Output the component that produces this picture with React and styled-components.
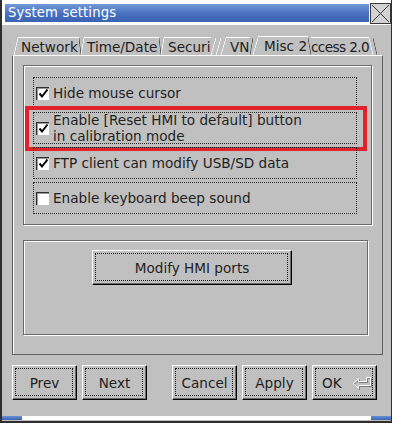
import styled, { createGlobalStyle } from 'styled-components';

const GlobalStyle = createGlobalStyle`
    html, body {
        margin: 0;
        padding: 0;
        background: #ffffff;
    }
    body {
        font-family: 'DejaVu Sans', 'Noto Sans', sans-serif;
    }
`;

const options = [
    { label: 'Hide mouse cursor', checked: true },
    { label: ['Enable [Reset HMI to default] button', 'in calibration mode'], checked: true, marked: true },
    { label: 'FTP client can modify USB/SD data', checked: true },
    { label: 'Enable keyboard beep sound', checked: false },
];

function CheckMark() {
    return (
        <svg width="11" height="11" viewBox="0 0 11 11">
            <polyline points="1.5,5.5 4,8.5 9.5,1.5" fill="none" stroke="#000" strokeWidth="2" />
        </svg>
    );
}

function ReturnArrow() {
    return (
        <svg width="22" height="16" viewBox="0 0 22 16">
            <path d="M7.5 3.5 L2 8.5 L7.5 13.5 L7.5 10.5 L19.5 10.5 L19.5 2.5 L15.5 2.5 L15.5 6.5 L7.5 6.5 Z" fill="none" stroke="#7a7a7a" strokeWidth="1" transform="translate(1 1)" />
            <path d="M7.5 3.5 L2 8.5 L7.5 13.5 L7.5 10.5 L19.5 10.5 L19.5 2.5 L15.5 2.5 L15.5 6.5 L7.5 6.5 Z" fill="none" stroke="#ffffff" strokeWidth="1" />
        </svg>
    );
}

export default function App() {
    return (
        <>
            <GlobalStyle />
            <Window>
                <TitleRow>
                    <TitleBar>System settings</TitleBar>
                    <CloseBox>
                        <svg width="19" height="19" viewBox="0 0 19 19">
                            <line x1="1" y1="1" x2="18" y2="18" stroke="#3c3c3c" strokeWidth="1" />
                            <line x1="18" y1="1" x2="1" y2="18" stroke="#3c3c3c" strokeWidth="1" />
                        </svg>
                    </CloseBox>
                </TitleRow>

                <TabStrip>
                    <Edge $w={4} />
                    <TabLabel $w={61} $pad={3}>Network</TabLabel>
                    <Edge $w={2} $dark $back />
                    <Edge $w={3} />
                    <TabLabel $w={75} $pad={3}>Time/Date</TabLabel>
                    <Edge $w={2} $dark $back />
                    <Edge $w={3} />
                    <TabLabel $w={47} $pad={4}>Securi</TabLabel>
                    <Edge $w={5} />
                    <Edge $w={5} />
                    <Edge $w={5} />
                    <TabLabel $w={24} $pad={4}>VN</TabLabel>
                    <Edge $w={3} $dark />
                    <Edge $w={5} />
                    <TabLabel $w={50} $pad={6} $raised>Misc 2</TabLabel>
                    <Edge $w={3} $dark $back />
                    <TabLabel $w={58} $tight>ccess 2.0</TabLabel>
                    <Edge $w={4} $back />
                    <Edge $w={4} $dark $back />
                </TabStrip>

                <Panel>
                    <Group $w={349} $h={160} $padTop={11} $padLeft={9}>
                        <OptionList>
                            {options.map((opt, i) => (
                                <OptionRow key={i}>
                                    <CheckBox>{opt.checked && <CheckMark />}</CheckBox>
                                    <OptionText>
                                        {Array.isArray(opt.label)
                                            ? opt.label.map((line) => <div key={line}>{line}</div>)
                                            : opt.label}
                                    </OptionText>
                                    {opt.marked && <Highlight />}
                                </OptionRow>
                            ))}
                        </OptionList>
                    </Group>
                    <Group $w={345} $h={95} $padTop={9} $padLeft={68} $top={15}>
                        <Button $w={200}>Modify HMI ports</Button>
                    </Group>
                </Panel>

                <ButtonRow>
                    <Button>Prev</Button>
                    <Button>Next</Button>
                    <Button $gapBefore={20}>Cancel</Button>
                    <Button>Apply</Button>
                    <Button $left>
                        OK
                        <ArrowSlot>
                            <ReturnArrow />
                        </ArrowSlot>
                    </Button>
                </ButtonRow>

                <BottomBar>
                    <BarEnd />
                    <BarEnd />
                </BottomBar>
            </Window>
        </>
    );
}

// styled-components
const Window = styled.div`
    width: 392px;
    height: 423px;
    box-sizing: border-box;
    border-left: 2px solid #2e2e2e;
    border-right: 1px solid #2e2e2e;
    border-bottom: 2px solid #2e2e2e;
    background: #c0c0c0;
    display: flex;
    flex-direction: column;
    color: #1e1e1e;
`;

const TitleRow = styled.div`
    height: 25px;
    display: flex;
    align-items: flex-start;
    background: #ffffff;
`;

const TitleBar = styled.div`
    flex: 1;
    height: 18px;
    margin: 4px 1px 0 3px;
    padding-left: 3px;
    background: linear-gradient(#7398da, #4670bf 55%, #3a63b3);
    color: #ffffff;
    font-size: 13.2px;
    line-height: 18px;
    letter-spacing: 0.15px;
    white-space: nowrap;
`;

const CloseBox = styled.div`
    width: 21px;
    height: 21px;
    margin-top: 3px;
    box-sizing: border-box;
    border: 1px solid #3a3a3a;
    background: #d2d2d2;
    display: flex;
    svg {
        display: block;
    }
`;

const TabStrip = styled.div`
    height: 18px;
    margin: 12px 0 0 12px;
    display: flex;
`;

const Edge = styled.span`
    width: ${({ $w }) => $w}px;
    flex: none;
    margin-top: 1px;
    background: linear-gradient(
        ${({ $back }) => ($back ? 'to bottom left' : 'to top left')},
        transparent calc(50% - 0.7px),
        ${({ $dark }) => ($dark ? '#505050' : '#ffffff')} 50%,
        transparent calc(50% + 0.7px)
    );
`;

const TabLabel = styled.span`
    width: ${({ $w }) => $w}px;
    flex: none;
    box-sizing: border-box;
    padding: 2px 0 0 ${({ $pad }) => $pad || 0}px;
    margin-top: ${({ $raised }) => ($raised ? -1 : 0)}px;
    border-top: 1px solid #ffffff;
    white-space: nowrap;
    font-size: 13.6px;
    line-height: 15px;
    letter-spacing: ${({ $tight }) => ($tight ? '-0.6px' : 'normal')};
`;

const Panel = styled.div`
    height: 300px;
    margin: 0 8px 0 10px;
    box-sizing: border-box;
    border: 1px solid #5e5e5e;
    border-top-color: #ffffff;
    box-shadow: inset 1px 0 0 #ffffff;
    padding: 9px 0 0 10px;
`;

const Group = styled.div`
    width: ${({ $w }) => $w}px;
    height: ${({ $h }) => $h}px;
    margin-top: ${({ $top }) => $top || 0}px;
    box-sizing: border-box;
    border: 1px solid #6a6a6a;
    box-shadow: inset 1px 1px 0 #ffffff, 1px 1px 0 #ffffff;
    padding: ${({ $padTop }) => $padTop}px 0 0 ${({ $padLeft }) => $padLeft}px;
`;

const OptionList = styled.div`
    display: flex;
    flex-direction: column;
    gap: 3px;
`;

const OptionRow = styled.div`
    position: relative;
    width: 324px;
    height: 32px;
    box-sizing: border-box;
    border: 1px dotted #262626;
    padding-left: 2px;
    display: flex;
    align-items: center;
    gap: 4px;
`;

const CheckBox = styled.span`
    width: 13px;
    height: 13px;
    flex: none;
    box-sizing: border-box;
    background: #ffffff;
    border-top: 1px solid #303030;
    border-left: 1px solid #303030;
    box-shadow: inset 1px 1px 0 #9a9a9a;
    display: flex;
    align-items: center;
    justify-content: center;
    svg {
        display: block;
    }
`;

const OptionText = styled.div`
    font-size: 13.6px;
    line-height: 16.5px;
    white-space: nowrap;
`;

const Highlight = styled.span`
    position: absolute;
    left: -9px;
    top: -7px;
    width: 342px;
    height: 45px;
    box-sizing: border-box;
    border: 4px solid #e1222a;
    pointer-events: none;
`;

const Button = styled.div`
    position: relative;
    width: ${({ $w }) => $w || 65}px;
    height: 35px;
    flex: none;
    margin-left: ${({ $gapBefore }) => $gapBefore || 0}px;
    box-sizing: border-box;
    border: 1px solid;
    border-color: #ffffff #000000 #000000 #ffffff;
    box-shadow: inset -1px -1px 0 #6a6a6a;
    background: #c0c0c0;
    display: flex;
    align-items: center;
    justify-content: ${({ $left }) => ($left ? 'flex-start' : 'center')};
    padding-left: ${({ $left }) => ($left ? 9 : 0)}px;
    font-size: 13.6px;
    white-space: nowrap;

    &::after {
        content: '';
        position: absolute;
        inset: 2px 3px 3px 2px;
        border: 1px dotted #1a1a1a;
    }
`;

const ArrowSlot = styled.span`
    margin-left: 9px;
    display: flex;
    svg {
        display: block;
    }
`;

const ButtonRow = styled.div`
    display: flex;
    gap: 5px;
    margin: 10px 0 0 10px;
`;

const BottomBar = styled.div`
    height: 4px;
    margin-top: 16px;
    background: #ffffff;
    display: flex;
    justify-content: space-between;
`;

const BarEnd = styled.span`
    width: 20px;
    background: linear-gradient(#6a8fd4, #3a63b3);
`;
